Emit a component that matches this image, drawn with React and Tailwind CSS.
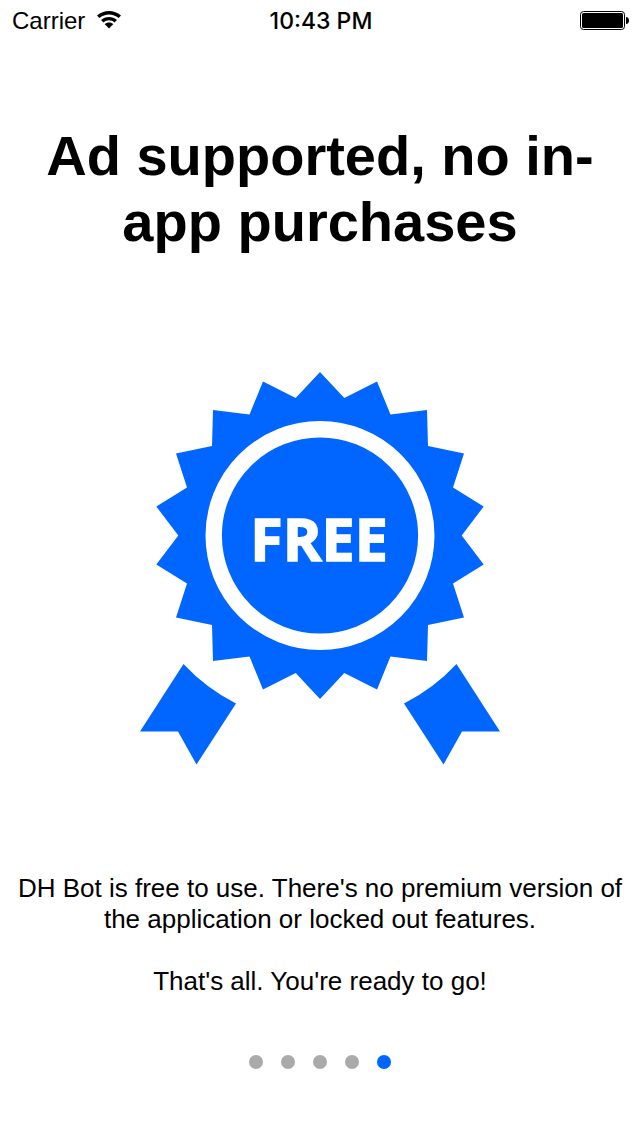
const points = [
  [180, 1], [204.3, 27], [237, 10.5], [250.5, 43.5], [287, 39], [288, 75],
  [324, 82.5], [313, 116.5], [343.7, 135.5], [321.7, 164.5],
];
const rightSide = [
  ...points,
  ...points.slice(0, -1).reverse().map(([x, y]) => [x, 329 - y]),
];
const leftSide = rightSide.slice(1, -1).reverse().map(([x, y]) => [360 - x, y]);
const starburst = [...rightSide, ...leftSide].map((p) => p.join(",")).join(" ");

const ribbon = "M43.5 293A187.6 187.6 0 0 0 96 332.5L56.5 393.5L38 360.5H0Z";

function WifiIcon() {
  return (
    <svg viewBox="0 0 24 18" className="h-[18px] w-6" role="img" aria-label="Wi-Fi">
      <path d="M0 4.6C6.7-1.5 17.3-1.5 24 4.6L21.6 7.1C16.2 2.4 7.8 2.4 2.4 7.1Z" />
      <path d="M4 8.9C8.5 4.9 15.5 4.9 20 8.9L17.5 11.4C14.4 8.6 9.6 8.6 6.5 11.4Z" />
      <path d="M7.6 13.1C10 11 14 11 16.4 13.1L12 17.6Z" />
    </svg>
  );
}

function BatteryIcon() {
  return (
    <svg viewBox="0 0 50 19" className="h-[19px] w-[50px]" role="img" aria-label="Battery full">
      <rect x="0.5" y="0.5" width="44" height="18" rx="3" fill="none" stroke="#000" />
      <rect x="2" y="2" width="41" height="15" rx="1.5" />
      <path d="M46 6C50 6 50 13 46 13Z" />
    </svg>
  );
}

function StatusBar() {
  return (
    <header className="grid h-[42px] grid-cols-3 items-center pr-2.5 pl-3 text-2xl">
      <div className="flex items-center gap-3">
        <span>Carrier</span>
        <div className="pb-0.5">
          <WifiIcon />
        </div>
      </div>
      <time className="text-center font-['Inter',sans-serif] text-[23px] font-medium whitespace-nowrap">
        10:43 PM
      </time>
      <div className="flex justify-end pb-0.5">
        <BatteryIcon />
      </div>
    </header>
  );
}

function FreeBadge() {
  return (
    <svg viewBox="0 0 360 394" className="h-auto w-[360px] max-w-full fill-[#0066ff]">
      <polygon points={starburst} />
      <circle cx="180" cy="164.5" r="106.3" fill="none" stroke="#fff" strokeWidth="16.4" />
      <path d={ribbon} />
      <path d={ribbon} transform="matrix(-1 0 0 1 360 0)" />
      <text
        x="179"
        y="190"
        textAnchor="middle"
        strokeWidth="1.5"
        className="fill-white stroke-white font-['Open_Sans',sans-serif] text-[59px] font-bold"
      >
        FREE
      </text>
    </svg>
  );
}

function PageDots({ count, current }) {
  return (
    <nav aria-label="Pages" className="flex justify-center gap-[18px]">
      {Array.from({ length: count }, (_, i) => (
        <button
          key={i}
          type="button"
          aria-label={`Page ${i + 1}`}
          aria-current={i === current ? "page" : undefined}
          className={
            i === current
              ? "size-3.5 rounded-full bg-[#0066ff]"
              : "size-3.5 rounded-full bg-[#aaaaaa]"
          }
        />
      ))}
    </nav>
  );
}

export default function App() {
  return (
    <div className="flex min-h-screen flex-col bg-white font-['Liberation_Sans',Arial,sans-serif] text-black">
      <StatusBar />
      <main className="flex flex-col items-center text-center">
        <h1 className="mt-[81px] px-6 text-[56px] leading-[66px] font-bold">
          Ad supported, no in-app purchases
        </h1>
        <div className="mt-[116px]">
          <FreeBadge />
        </div>
        <div className="mt-[108px] flex flex-col gap-[31px] px-2 text-[26px] leading-[31px]">
          <p>
            DH Bot is free to use. There's no premium version of the application or locked out
            features.
          </p>
          <p>That's all. You're ready to go!</p>
        </div>
        <div className="mt-[58px] pb-16">
          <PageDots count={5} current={4} />
        </div>
      </main>
    </div>
  );
}
